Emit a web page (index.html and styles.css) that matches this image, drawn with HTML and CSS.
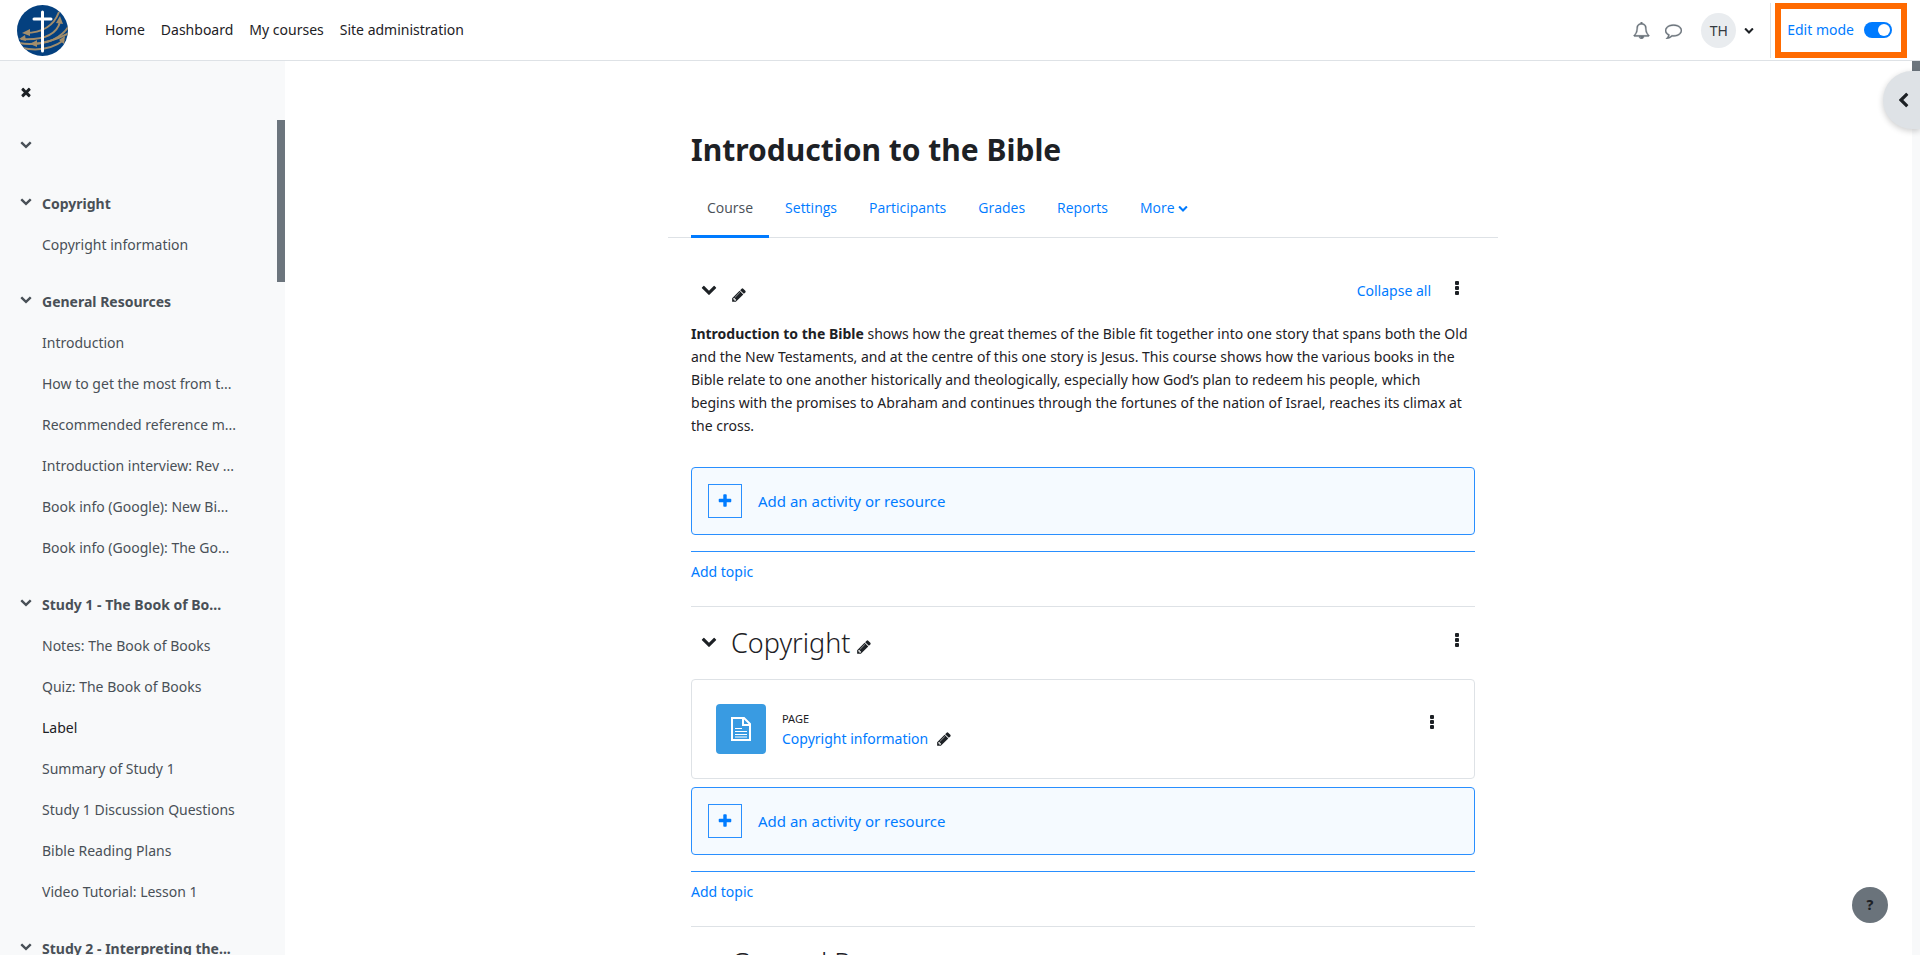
FILE: index.html
```html
<!DOCTYPE html>
<html lang="en">
  <head>
    <meta charset="UTF-8" />
    <meta name="viewport" content="width=device-width, initial-scale=1.0" />
    <title>Introduction to the Bible</title>
    <link rel="stylesheet" href="styles.css">
  </head>
  <body>
    <!-- Icon sprite -->
    <svg class="sprite" aria-hidden="true">
      <symbol id="chevron" viewBox="0 0 1792 1792"><path d="M1683 808l-742 741q-19 19-45 19t-45-19l-742-741q-19-19-19-45.500t19-45.500l166-165q19-19 45-19t45 19l531 531 531-531q19-19 45-19t45 19l166 165q19 19 19 45.500t-19 45.500z"/></symbol>
      <symbol id="pencil" viewBox="0 0 1792 1792"><path d="M491 1536l91-91-235-235-91 91v107h128v128h107zm523-928q0-22-22-22-10 0-17 7l-542 542q-7 7-7 17 0 22 22 22 10 0 17-7l542-542q7-7 7-17zm-54-192l416 416-832 832h-416v-416zm683 96q0 53-37 90l-166 166-416-416 166-165q36-38 90-38 53 0 91 38l235 234q37 39 37 91z"/></symbol>
      <symbol id="times" viewBox="0 0 1792 1792"><path d="M1490 1322q0 40-28 68l-136 136q-28 28-68 28t-68-28l-294-294-294 294q-28 28-68 28t-68-28l-136-136q-28-28-28-68t28-68l294-294-294-294q-28-28-28-68t28-68l136-136q28-28 68-28t68 28l294 294 294-294q28-28 68-28t68 28l136 136q28 28 28 68t-28 68l-294 294 294 294q28 28 28 68z"/></symbol>
      <symbol id="plus" viewBox="0 0 1792 1792"><path d="M1600 736v192q0 40-28 68t-68 28h-416v416q0 40-28 68t-68 28h-192q-40 0-68-28t-28-68v-416h-416q-40 0-68-28t-28-68v-192q0-40 28-68t68-28h416v-416q0-40 28-68t68-28h192q40 0 68 28t28 68v416h416q40 0 68 28t28 68z"/></symbol>
      <symbol id="bell" viewBox="0 0 1792 1792"><path d="M912 1696q0-16-16-16-59 0-101.500-42.500t-42.500-101.500q0-16-16-16t-16 16q0 73 51.500 124.500t124.500 51.500q16 0 16-16zm-666-288h1300q-266-300-266-832 0-51-24-105t-69-103-121.500-80.500-169.500-31.500-169.500 31.500-121.500 80.500-69 103-24 105q0 532-266 832zm1482 0q0 52-38 90t-90 38h-448q0 106-75 181t-181 75-181-75-75-181h-448q-52 0-90-38t-38-90q50-42 91-88t85-119.500 74.500-158.500 50-206 19.500-260q0-152 117-282.500t307-158.500q-8-19-8-39 0-40 28-68t68-28 68 28 28 68q0 20-8 39 190 28 307 158.500t117 282.500q0 139 19.500 260t50 206 74.500 158.500 85 119.500 91 88z"/></symbol>
      <symbol id="comment" viewBox="0 0 1792 1792"><path d="M896 384q-204 0-381.500 69.500t-282 187.500-104.500 255q0 112 71.500 213.500t201.500 175.500l87 50-27 96q-24 91-70 172 152-63 275-171l43-38 57 6q69 8 130 8 204 0 381.500-69.500t282-187.500 104.500-255-104.500-255-282-187.500-381.500-69.500zm896 512q0 174-120 321.500t-326 233-450 85.500q-70 0-145-8-198 175-460 242-49 14-114 22h-5q-15 0-27-10.500t-16-27.500v-1q-3-4-.5-12t2-10 4.500-9.500l6-9 7-8.500 8-9q7-8 31-34.500t34.500-38 31-39.500 32.500-51 27-59 26-76q-157-89-247.500-220t-90.500-281q0-174 120-321.500t326-233 450-85.500 450 85.500 326 233 120 321.500z"/></symbol>
      <symbol id="kebab" viewBox="0 0 16 16"><rect x="6" y="1" width="4" height="4" rx="1"/><rect x="6" y="6" width="4" height="4" rx="1"/><rect x="6" y="11" width="4" height="4" rx="1"/></symbol>
    </svg>

    <header class="navbar">
      <a class="brand" href="#" aria-label="Site home">
        <svg viewBox="0 0 51 51">
          <defs><clipPath id="disc"><circle cx="25.500" cy="25.500" r="25.500"/></clipPath></defs>
          <circle cx="25.500" cy="25.500" r="25.500" fill="#04407f"/>
          <g clip-path="url(#disc)" fill="none" stroke="#a28d6b" stroke-width="2">
            <path d="M42 7Q34 28 8 28"/>
            <path d="M43 17Q38 36 4 34"/>
            <path d="M52 21Q40 39 14 39"/>
            <path d="M2 38Q26 42 52 28"/>
            <path d="M5 43Q30 48 47 35"/>
          </g>
          <g fill="#a28d6b">
            <path d="M5 28l8-4v7zM43 11l3 8-7-1zM2 34l6-4 1 6zM13 39l7-4v7zM48 31l-1 8-5-4z"/>
          </g>
          <path d="M25.500 7v39M17 14h17" stroke="#fff" stroke-width="3" stroke-linecap="round"/>
        </svg>
      </a>
      <nav class="main-nav">
        <a href="#">Home</a>
        <a href="#">Dashboard</a>
        <a href="#">My courses</a>
        <a href="#">Site administration</a>
      </nav>
      <div class="user-nav">
        <button class="icon-btn muted" aria-label="Notifications"><svg class="icon-lg"><use href="#bell"/></svg></button>
        <button class="icon-btn muted" aria-label="Messages"><svg class="icon-lg"><use href="#comment"/></svg></button>
        <button class="user-menu" aria-label="User menu">
          <span class="avatar">TH</span>
          <svg class="icon-xxs"><use href="#chevron"/></svg>
        </button>
        <form class="edit-mode">
          <div class="highlight">
            <label for="editmode">Edit mode</label>
            <input type="checkbox" id="editmode" class="switch" checked />
          </div>
        </form>
      </div>
    </header>

    <div class="page">
      <aside class="drawer">
        <div class="drawer-header">
          <button class="icon-btn" aria-label="Close course index"><svg class="icon-sm"><use href="#times"/></svg></button>
        </div>
        <nav class="course-index">
          <section>
            <div class="index-title"><button class="icon-btn" aria-label="Toggle section"><svg class="icon-xs"><use href="#chevron"/></svg></button></div>
          </section>
          <section>
            <div class="index-title"><button class="icon-btn" aria-label="Toggle section"><svg class="icon-xs"><use href="#chevron"/></svg></button><a href="#">Copyright</a></div>
            <ul>
              <li><a href="#">Copyright information</a></li>
            </ul>
          </section>
          <section>
            <div class="index-title"><button class="icon-btn" aria-label="Toggle section"><svg class="icon-xs"><use href="#chevron"/></svg></button><a href="#">General Resources</a></div>
            <ul>
              <li><a href="#">Introduction</a></li>
              <li><a href="#">How to get the most from t...</a></li>
              <li><a href="#">Recommended reference m...</a></li>
              <li><a href="#">Introduction interview: Rev ...</a></li>
              <li><a href="#">Book info (Google): New Bi...</a></li>
              <li><a href="#">Book info (Google): The Go...</a></li>
            </ul>
          </section>
          <section>
            <div class="index-title"><button class="icon-btn" aria-label="Toggle section"><svg class="icon-xs"><use href="#chevron"/></svg></button><a href="#">Study 1 - The Book of Bo...</a></div>
            <ul>
              <li><a href="#">Notes: The Book of Books</a></li>
              <li><a href="#">Quiz: The Book of Books</a></li>
              <li>Label</li>
              <li><a href="#">Summary of Study 1</a></li>
              <li><a href="#">Study 1 Discussion Questions</a></li>
              <li><a href="#">Bible Reading Plans</a></li>
              <li><a href="#">Video Tutorial: Lesson 1</a></li>
            </ul>
          </section>
          <section>
            <div class="index-title"><button class="icon-btn" aria-label="Toggle section"><svg class="icon-xs"><use href="#chevron"/></svg></button><a href="#">Study 2 - Interpreting the...</a></div>
          </section>
        </nav>
        <div class="drawer-thumb"></div>
      </aside>

      <main class="content">
        <div class="container">
          <h1>Introduction to the Bible</h1>
          <nav class="tabs">
            <a class="active" href="#">Course</a>
            <a href="#">Settings</a>
            <a href="#">Participants</a>
            <a href="#">Grades</a>
            <a href="#">Reports</a>
            <a href="#">More <svg class="icon-xxs"><use href="#chevron"/></svg></a>
          </nav>

          <section class="topic">
            <div class="topic-header">
              <button class="icon-btn toggle" aria-label="Collapse section"><svg class="icon-md"><use href="#chevron"/></svg></button>
              <button class="icon-btn edit" aria-label="Edit section name"><svg class="icon-md"><use href="#pencil"/></svg></button>
              <a class="collapse-all" href="#">Collapse all</a>
              <button class="icon-btn menu" aria-label="Section menu"><svg class="icon-md"><use href="#kebab"/></svg></button>
            </div>
            <p class="summary">
              <strong>Introduction to the Bible</strong> shows how the great themes of the Bible fit together into one story that spans both the Old
              and the New Testaments, and at the centre of this one story is Jesus. This course shows how the various books in the<br>
              Bible relate to one another historically and theologically, especially how God’s plan to redeem his people, which<br>
              begins with the promises to Abraham and continues through the fortunes of the nation of Israel, reaches its climax at<br>
              the cross.
            </p>
            <button class="add-activity">
              <span class="plus"><svg class="icon-md"><use href="#plus"/></svg></span>
              Add an activity or resource
            </button>
            <div class="add-topic"><a href="#">Add topic</a></div>
          </section>

          <section class="topic">
            <div class="topic-header">
              <button class="icon-btn toggle" aria-label="Collapse section"><svg class="icon-md"><use href="#chevron"/></svg></button>
              <h2>Copyright</h2>
              <button class="icon-btn edit" aria-label="Edit section name"><svg class="icon-md"><use href="#pencil"/></svg></button>
              <button class="icon-btn menu" aria-label="Section menu"><svg class="icon-md"><use href="#kebab"/></svg></button>
            </div>
            <div class="activity">
              <span class="activity-icon">
                <svg viewBox="0 0 20 24" stroke="#fff" stroke-width="2">
                  <path d="M1 1h12l6 6v16H1z"/>
                  <path d="M12 1v7h7"/>
                  <path d="M4 11.500h7M4 14.500h12M4 17.500h12M4 20h12" stroke-width="1"/>
                </svg>
              </span>
              <div class="activity-info">
                <span class="activity-type">PAGE</span>
                <div class="activity-name">
                  <a href="#">Copyright information</a>
                  <button class="icon-btn" aria-label="Edit title"><svg class="icon-md"><use href="#pencil"/></svg></button>
                </div>
              </div>
              <button class="icon-btn menu" aria-label="Activity menu"><svg class="icon-md"><use href="#kebab"/></svg></button>
            </div>
            <button class="add-activity">
              <span class="plus"><svg class="icon-md"><use href="#plus"/></svg></span>
              Add an activity or resource
            </button>
            <div class="add-topic"><a href="#">Add topic</a></div>
          </section>

          <section class="topic">
            <div class="topic-header">
              <button class="icon-btn toggle" aria-label="Collapse section"><svg class="icon-md"><use href="#chevron"/></svg></button>
              <h2>General Resources</h2>
            </div>
          </section>
        </div>
        <div class="page-scroll"></div>
        <button class="drawer-toggle" aria-label="Open block drawer"><svg class="icon-md"><use href="#chevron"/></svg></button>
        <button class="help" aria-label="Help">?</button>
      </main>
    </div>
  </body>
</html>
```
FILE: styles.css
```css
/* General Reset */
* {
  margin: 0;
  padding: 0;
  box-sizing: border-box;
}

body {
  display: flex;
  flex-direction: column;
  height: 100vh;
  overflow: hidden;
  font-family: "Noto Sans", "Open Sans", sans-serif;
  font-size: 14px;
  line-height: 22px;
  color: #1d2125;
  background: #fff;
}

a {
  color: #007bff;
  text-decoration: none;
}

button {
  font: inherit;
  color: inherit;
  background: none;
  border: 0;
  cursor: pointer;
}

ul {
  list-style: none;
}

svg {
  display: block;
  fill: currentColor;
}

/* Icons */
.sprite {
  position: absolute;
  width: 0;
  height: 0;
}

.icon-xxs {
  width: 10px;
  height: 10px;
}

.icon-xs {
  width: 12px;
  height: 12px;
}

.icon-sm {
  width: 14px;
  height: 14px;
}

.icon-md {
  width: 16px;
  height: 16px;
}

.icon-lg {
  width: 17px;
  height: 17px;
}

.icon-btn {
  display: flex;
  align-items: center;
  justify-content: center;
}

.muted {
  color: #6a737b;
}

.muted svg {
  stroke: currentColor;
  stroke-width: 40px;
}

/* Navbar */
.navbar {
  display: flex;
  flex: none;
  align-items: center;
  height: 61px;
  padding: 0 13px 0 17px;
  border-bottom: 1px solid #dee2e6;
}

.brand svg {
  width: 51px;
  height: 51px;
}

.main-nav {
  display: flex;
  gap: 16px;
  margin-left: 37px;
}

.main-nav a {
  color: #1d2125;
}

.user-nav {
  display: flex;
  align-items: center;
  margin-left: auto;
}

.user-nav .icon-btn {
  width: 32px;
}

.user-menu {
  display: flex;
  align-items: center;
  gap: 8px;
  margin: 0 16px 0 12px;
}

.avatar {
  width: 35px;
  height: 35px;
  border-radius: 50%;
  background: #e9ecef;
  color: #343a40;
  line-height: 36px;
}

.edit-mode {
  padding: 0 0 0 4px;
  border-left: 1px solid #dee2e6;
}

.highlight {
  display: flex;
  align-items: center;
  gap: 10px;
  height: 55px;
  padding: 0 9px 0 6px;
  border: 6px solid #ff6a00;
  color: #007bff;
}

.switch {
  appearance: none;
  width: 28px;
  height: 16px;
  padding: 2px;
  border-radius: 8px;
  background: #007bff;
}

.switch::before {
  content: "";
  display: block;
  width: 12px;
  height: 12px;
  margin-left: auto;
  border-radius: 50%;
  background: #fff;
}

.page {
  display: flex;
  flex: 1;
  min-height: 0;
}

/* Course index */
.drawer {
  position: relative;
  flex: none;
  width: 285px;
  overflow: hidden;
  background: #f8f9fa;
}

.drawer-header {
  display: flex;
  align-items: center;
  height: 65px;
  padding-left: 19px;
  padding-bottom: 4px;
}

.course-index section {
  margin-bottom: 16px;
}

.index-title {
  display: flex;
  height: 41px;
  padding-left: 20px;
  font-weight: 700;
  color: #495057;
}

.index-title .icon-btn {
  height: 36px;
  margin-right: 10px;
}

.course-index li,
.index-title {
  line-height: 41px;
  white-space: nowrap;
}

.course-index li {
  padding-left: 42px;
}

.course-index a {
  color: #495057;
}

.drawer-thumb {
  position: absolute;
  top: 59px;
  right: 0;
  width: 8px;
  height: 162px;
  background: #6c757d;
}

/* Main content */
.content {
  position: relative;
  flex: 1;
  overflow: hidden;
  padding: 65px 39px 0 0;
}

.container {
  max-width: 830px;
  margin: 0 auto;
  padding: 0 23px;
}

h1 {
  font-size: 30px;
  line-height: 48px;
}

.tabs {
  display: flex;
  margin: 4px -23px 0;
  padding: 0 23px;
  border-bottom: 1px solid #dee2e6;
  font-family: "Open Sans", "Noto Sans", sans-serif;
}

.tabs a {
  display: flex;
  align-items: center;
  gap: 3px;
  height: 60px;
  margin-bottom: -1px;
  padding: 3px 16px 0;
  border-bottom: 3px solid transparent;
}

.tabs .active {
  color: #495057;
  border-color: #007bff;
}

.topic {
  border-bottom: 1px solid #dee2e6;
}

.topic-header {
  display: flex;
  align-items: center;
  height: 72px;
}

.topic:first-of-type .topic-header {
  height: 84px;
  padding-top: 22px;
}

.toggle {
  width: 28px;
  margin-right: 12px;
}

.topic-header .toggle {
  padding: 0 0 4px 8px;
}

h2 {
  margin-right: 6px;
  font-size: 27px;
  font-weight: 300;
  line-height: 36px;
}

.topic-header .edit {
  padding-top: 8px;
}

.menu {
  margin-left: auto;
  padding: 0 10px;
}

.topic-header .menu {
  padding-bottom: 6px;
}

.collapse-all {
  margin-left: auto;
}

.collapse-all + .menu {
  margin-left: 8px;
}

.summary {
  margin-bottom: 30px;
  line-height: 23px;
}

.add-activity {
  display: flex;
  align-items: center;
  gap: 16px;
  width: 100%;
  height: 68px;
  padding: 0 16px;
  border: 1px solid #298fff;
  border-radius: 4px;
  background: #f5faff;
  font-size: 15px;
  color: #007bff;
}

.plus {
  display: grid;
  place-items: center;
  width: 34px;
  height: 34px;
  border: 1px solid #298fff;
}

.add-topic {
  height: 55px;
  margin-top: 16px;
  padding-top: 9px;
  border-top: 1px solid #298fff;
}

.activity {
  display: flex;
  height: 100px;
  margin-bottom: 8px;
  padding: 24px;
  border: 1px solid #dee2e6;
  border-radius: 4px;
}

.activity-icon {
  display: grid;
  place-items: center;
  width: 50px;
  height: 50px;
  margin-right: 16px;
  border-radius: 4px;
  background: #399be2;
}

.activity-icon svg {
  width: 20px;
  height: 24px;
  fill: none;
}

.activity-type {
  display: block;
  padding-top: 6px;
  font-size: 11px;
  line-height: 18px;
}

.activity-name {
  display: flex;
  gap: 8px;
}

.activity .menu {
  height: 36px;
}

/* Floating controls */
.page-scroll {
  position: absolute;
  top: 0;
  right: 0;
  bottom: 0;
  width: 8px;
  background: #f8f9fa;
  border-top: 10px solid #6c757d;
}

.drawer-toggle {
  position: absolute;
  top: 10px;
  right: 0;
  width: 37px;
  height: 58px;
  padding-left: 14px;
  border-radius: 29px 0 0 29px;
  background: #dee2e6;
  box-shadow: 0 2px 6px rgba(0, 0, 0, 0.2);
}

.drawer-toggle svg {
  transform: rotate(90deg);
}

.help {
  position: absolute;
  right: 32px;
  bottom: 32px;
  width: 36px;
  height: 36px;
  border-radius: 50%;
  background: #6a737b;
  font-weight: 800;
}
```
